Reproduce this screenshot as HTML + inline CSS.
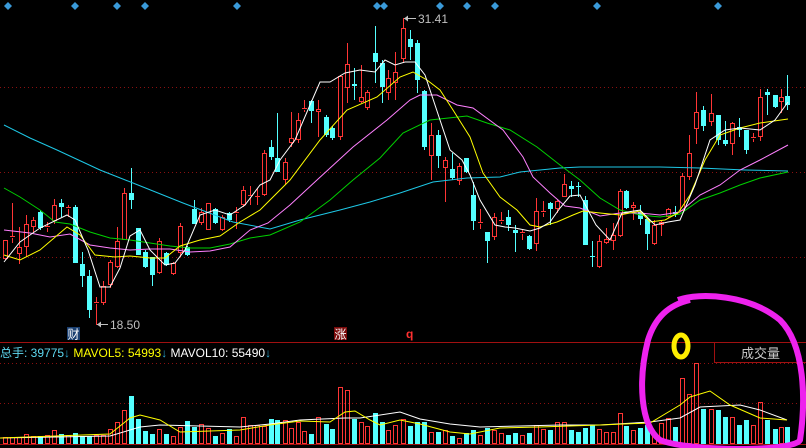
<!DOCTYPE html>
<html><head><meta charset="utf-8">
<style>
html,body{margin:0;padding:0;background:#000;width:806px;height:448px;overflow:hidden}
svg{display:block}
text{font-family:"Liberation Sans","Noto Sans CJK SC",sans-serif}
</style></head>
<body>
<svg id="s" width="806" height="448" viewBox="0 0 806 448" xmlns="http://www.w3.org/2000/svg">
<rect width="806" height="448" fill="#000"/>
<g stroke="#8a1010" stroke-width="1" stroke-dasharray="1,3">
<line x1="0" y1="87.5" x2="806" y2="87.5"/>
<line x1="0" y1="172.5" x2="806" y2="172.5"/>
<line x1="0" y1="257.5" x2="806" y2="257.5"/>
<line x1="0" y1="363.5" x2="806" y2="363.5"/>
<line x1="0" y1="403.5" x2="806" y2="403.5"/>
</g>
<line x1="0" y1="342.5" x2="806" y2="342.5" stroke="#a01010"/>
<line x1="0" y1="444.5" x2="806" y2="444.5" stroke="#a01010"/>
<rect x="714.5" y="342.5" width="95" height="20" fill="none" stroke="#a01010"/>
<text x="741" y="358" font-size="13" fill="#c8c8c8">成交量</text>
<g id="cand" shape-rendering="crispEdges"></g>
<g fill="none" stroke-width="1">
<polyline stroke="#1ec8e6" points="4,125 30,138 57,150 100,170 133,183 183,203 233,222 270,229 300,220 340,210 370,202 400,193 433,182 467,178 500,177 520,172 560,168 580,167 660,167 700,168 745,170 788,171"/>
<polyline stroke="#00d000" points="4,188 20,197 40,210 55,222 70,224 90,232 110,238 130,240 150,243 170,246 190,248 210,248 230,244 250,238 270,235 300,222 330,200 353,180 380,158 403,133 430,120 467,116 487,123 510,130 537,147 560,165 580,180 600,198 620,210 640,215 660,217 680,214 700,200 720,193 740,185 760,178 788,172"/>
<polyline stroke="#ff80ff" points="4,230 30,233 50,237 70,234 90,245 110,248 130,250 150,249 170,249 190,252 210,251 230,247 250,230 268,223 290,205 317,180 353,147 387,120 410,100 420,95 437,95 457,105 473,108 503,130 523,157 533,177 550,193 565,206 580,208 600,216 620,213 640,213 660,215 680,212 700,195 720,185 740,170 760,160 788,145"/>
<polyline stroke="#ffff00" points="4,255 20,260 40,250 67,227 80,235 95,255 115,257 130,256 150,258 165,258 180,246 200,240 220,236 240,222 260,210 270,200 290,180 320,140 347,110 377,97 400,77 413,72 427,80 440,90 453,110 470,137 483,173 500,197 517,210 530,225 540,227 557,222 573,215 583,211 600,213 620,215 640,211 650,222 665,220 678,213 690,195 705,160 720,135 740,128 760,123 788,119"/>
<polyline stroke="#ffffff" points="4,262 20,242 40,228 67,215 75,220 88,250 100,287 110,287 120,268 130,236 140,230 150,250 165,265 175,263 185,250 200,215 215,210 230,215 245,205 260,185 270,180 280,160 295,140 310,105 320,82 330,82 345,73 360,70 375,72 385,60 395,65 405,62 415,62 425,75 440,120 450,150 462,160 470,175 480,200 495,225 505,227 515,228 530,231 540,228 550,222 560,208 570,196 580,195 596,225 610,240 622,213 640,210 655,225 668,222 680,220 695,185 710,140 725,130 740,128 760,130 775,120 788,102"/>
<polyline stroke="#ffffff" points="0,438 110,436 140,427 160,425 240,427 270,424 300,420 345,418 360,418 400,412 420,419 450,424 480,427 520,426 560,425 600,425 650,422 680,418 700,407 740,405 760,410 787,420"/>
<polyline stroke="#ffff00" points="0,438 110,434 130,418 140,415 160,420 180,432 240,430 270,425 300,421 330,422 345,412 355,411 370,420 380,425 400,420 420,424 450,432 470,434 500,428 540,427 600,425 650,423 680,405 690,397 710,391 730,405 760,418 787,420"/>
</g>
<g fill="#3a9ad9" id="dia"></g>
<g font-size="12">
<line x1="404" y1="18.5" x2="416" y2="18.5" stroke="#c0c0c0"/><path d="M404,18.5 l4,-3 v6z" fill="#c0c0c0"/>
<text x="418" y="23" fill="#c0c0c0">31.41</text>
<line x1="97" y1="324.5" x2="108" y2="324.5" stroke="#c0c0c0"/><path d="M97,324.5 l4,-3 v6z" fill="#c0c0c0"/>
<text x="110" y="329" fill="#c0c0c0">18.50</text>
</g>
<rect x="67" y="327" width="13" height="13" fill="#1a3f70"/>
<text x="67.5" y="338.5" font-size="12" fill="#fff">财</text>
<rect x="334" y="327" width="13" height="13" fill="#7a0a0a"/>
<text x="334.5" y="338.5" font-size="12" fill="#fff">涨</text>
<text x="406" y="338" font-size="12" fill="#ff3030" font-weight="bold">q</text>
<text x="0" y="357" font-size="12"><tspan fill="#5ed8f0">总手: 39775</tspan><tspan fill="#2aa8d0">↓</tspan><tspan fill="#ffff00"> MAVOL5: 54993</tspan><tspan fill="#2aa8d0">↓</tspan><tspan fill="#ffffff"> MAVOL10: 55490</tspan><tspan fill="#2aa8d0">↓</tspan></text>
<path d="M678,300 C700,292 750,295 780,320 C805,345 806,400 800,440 C795,452 690,452 660,440 C640,425 638,380 648,340 C655,318 668,305 690,300" fill="none" stroke="#ee22ee" stroke-width="6"/>
<ellipse cx="681" cy="346" rx="7" ry="11" fill="none" stroke="#ffee00" stroke-width="5"/>
</svg>
<script>
var C=[[5,'r',240,259,240,260,7],[12,'r',236,238,203,243,7],[19,'r',247,254,227,264,7],[26,'r',224,247,215,257,10],[33,'r',220,227,217,232,8],[40,'c',212,228,210,230,8],[47,'r',226,228,222,232,9],[54,'r',205,221,199,224,14],[61,'c',203,207,199,217,10],[68,'r',207,209,205,217,9],[75,'c',207,263,205,263,11],[82,'c',264,276,252,287,8],[89,'c',276,310,270,318,8],[96,'r',302,304,297,325,9],[103,'r',286,303,281,305,9],[110,'r',262,285,260,288,15],[117,'r',241,267,227,268,22],[124,'r',193,240,188,240,34],[131,'c',193,200,168,209,48],[138,'c',228,255,228,255,25],[145,'c',252,267,250,268,13],[152,'c',257,275,257,286,10],[159,'r',241,273,238,274,15],[166,'c',253,265,252,266,10],[173,'r',263,274,262,275,8],[180,'r',226,253,223,257,17],[187,'c',247,255,246,256,23],[194,'c',209,224,200,224,17],[201,'r',212,223,208,225,20],[208,'r',203,230,203,230,16],[215,'c',209,223,208,224,8],[222,'r',217,230,215,231,11],[229,'c',213,220,212,222,15],[236,'r',212,214,207,229,8],[243,'r',190,205,186,207,27],[250,'r',195,197,186,205,19],[257,'r',196,197,188,205,19],[264,'r',153,195,150,196,18],[271,'c',147,157,140,160,25],[277,'c',158,172,113,172,24],[285,'r',162,180,158,185,24],[291,'r',138,143,112,147,16],[298,'r',120,140,113,143,22],[304,'r',108,110,100,112,13],[311,'c',101,111,100,123,10],[318,'r',109,112,100,137,27],[326,'c',117,135,115,137,20],[332,'c',128,138,126,140,15],[340,'r',76,137,75,140,57],[347,'r',64,88,43,103,54],[354,'c',84,86,68,100,25],[361,'r',97,102,65,103,22],[367,'r',92,108,90,110,18],[375,'c',53,62,26,83,31],[382,'c',63,87,60,103,22],[388,'r',78,93,70,100,14],[395,'r',72,83,52,100,19],[403,'r',28,59,18,62,25],[410,'c',39,47,30,60,18],[417,'c',43,80,40,93,22],[424,'c',91,147,90,150,22],[431,'r',135,156,123,180,12],[438,'c',135,156,130,168,12],[445,'r',160,168,157,202,14],[452,'c',169,178,153,180,8],[459,'r',166,181,163,185,6],[466,'c',158,172,158,173,11],[473,'c',195,221,182,230,14],[480,'r',222,224,209,229,9],[487,'c',232,241,232,263,16],[494,'r',217,237,213,240,14],[501,'r',220,222,212,224,11],[508,'c',217,225,210,231,9],[515,'c',230,233,225,252,11],[522,'r',232,234,230,240,9],[529,'c',236,249,235,250,11],[536,'r',211,244,198,251,19],[543,'r',211,213,201,217,15],[550,'c',203,209,202,225,14],[557,'r',201,209,200,213,22],[564,'r',184,197,174,197,22],[571,'c',186,189,181,197,14],[578,'c',186,187,182,197,12],[585,'c',200,245,196,245,16],[592,'c',256,257,241,267,19],[599,'r',241,267,235,268,15],[606,'r',239,243,228,244,12],[613,'r',235,241,223,250,12],[620,'r',191,236,189,237,31],[626,'c',191,208,190,209,18],[633,'r',205,208,202,220,14],[640,'c',212,219,205,225,16],[647,'c',219,234,218,250,19],[654,'r',225,244,220,245,9],[661,'r',222,225,220,236,21],[668,'r',209,217,208,218,26],[675,'c',212,214,206,217,17],[682,'r',176,211,173,211,66],[689,'r',153,177,135,180,50],[696,'r',112,129,92,144,81],[703,'c',110,126,106,131,35],[711,'r',113,122,94,126,35],[718,'c',115,140,115,145,34],[725,'c',140,144,121,146,27],[732,'r',123,144,122,155,27],[739,'c',127,130,118,137,19],[746,'c',130,150,130,154,24],[753,'r',137,139,133,142,19],[760,'r',97,137,89,141,42],[767,'c',92,95,89,115,24],[775,'c',95,107,95,108,15],[781,'r',97,102,89,113,17],[787,'c',96,105,75,110,17]];
var g=document.getElementById('cand'),h='';
var R='#ff3535',Cy='#54ffff';
C.forEach(function(c){var x=c[0],col=c[1]=='r'?R:Cy;
var bt=c[2],bb=Math.max(c[3],c[2]+1);
h+='<line x1="'+(x+.5)+'" y1="'+c[4]+'" x2="'+(x+.5)+'" y2="'+bt+'" stroke="'+col+'"/>';
h+='<line x1="'+(x+.5)+'" y1="'+bb+'" x2="'+(x+.5)+'" y2="'+c[5]+'" stroke="'+col+'"/>';
if(c[1]=='r'){ if(bb-bt<=2)h+='<rect x="'+(x-2)+'" y="'+bt+'" width="5" height="1" fill="'+R+'"/>';
 else h+='<rect x="'+(x-1.5)+'" y="'+(bt+.5)+'" width="4" height="'+(bb-bt-1)+'" fill="#000" stroke="'+R+'"/>';}
else h+='<rect x="'+(x-2)+'" y="'+bt+'" width="5" height="'+(bb-bt)+'" fill="'+Cy+'"/>';
var vt=444-c[6];
if(c[1]=='r')h+='<rect x="'+(x-1.5)+'" y="'+(vt+.5)+'" width="4" height="'+(c[6]-1)+'" fill="none" stroke="'+R+'"/>';
else h+='<rect x="'+(x-2)+'" y="'+vt+'" width="5" height="'+c[6]+'" fill="'+Cy+'"/>';
});
g.innerHTML=h;
var d=document.getElementById('dia'),dh='';
[8,75,117,145,237,377,384,440,467,495,597,718].forEach(function(x){dh+='<path d="M'+x+',2 l4,4 -4,4 -4,-4z"/>';});
d.innerHTML=dh;
</script>
</body></html>
